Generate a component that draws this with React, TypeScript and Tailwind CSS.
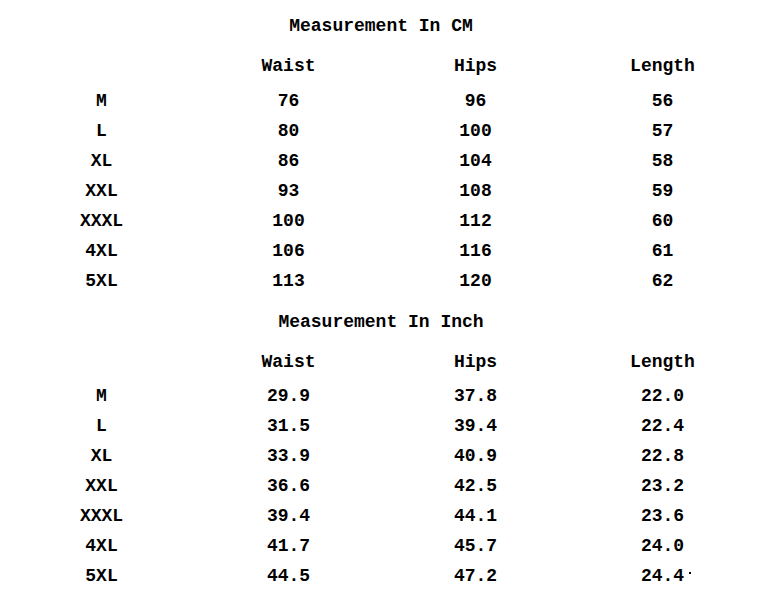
import React from "react";

const cm = [
  ["M", "76", "96", "56"],
  ["L", "80", "100", "57"],
  ["XL", "86", "104", "58"],
  ["XXL", "93", "108", "59"],
  ["XXXL", "100", "112", "60"],
  ["4XL", "106", "116", "61"],
  ["5XL", "113", "120", "62"],
];
const inch = [
  ["M", "29.9", "37.8", "22.0"],
  ["L", "31.5", "39.4", "22.4"],
  ["XL", "33.9", "40.9", "22.8"],
  ["XXL", "36.6", "42.5", "23.2"],
  ["XXXL", "39.4", "44.1", "23.6"],
  ["4XL", "41.7", "45.7", "24.0"],
  ["5XL", "44.5", "47.2", "24.4"],
];

function Row({ cells, last }: { cells: string[]; last?: boolean }) {
  return (
    <div className="grid grid-cols-4 h-[30px] leading-[30px] text-center">
      {cells.map((c, i) => (
        <div key={i} className="relative">
          {c}
          {last && i === 3 ? (
            <span className="absolute left-[120px] top-[11px] w-[2px] h-[2px] bg-black" />
          ) : null}
        </div>
      ))}
    </div>
  );
}

function Table({ title, rows, first }: { title: string; rows: string[][]; first?: boolean }) {
  return (
    <div className={first ? "pt-[11px]" : "pt-[11px]"}>
      <div className="h-[30px] leading-[30px] text-center pr-[2px]">{title}</div>
      <div className="mt-[10px]">
        <Row cells={["", "Waist", "Hips", "Length"]} />
      </div>
      <div className={first ? "mt-[5px]" : "mt-[4px]"}>
        {rows.map((r, i) => (
          <Row key={i} cells={r} last={!first && i === rows.length - 1} />
        ))}
      </div>
    </div>
  );
}

export default function App() {
  return (
    <div
      className="w-[762px] h-[597px] bg-white text-black font-bold text-[18px] pl-[8px] pr-[6px] overflow-hidden"
      style={{ fontFamily: '"Liberation Mono", "Courier New", monospace' }}
    >
      <Table title="Measurement In CM" rows={cm} first />
      <Table title="Measurement In Inch" rows={inch} />
    </div>
  );
}
